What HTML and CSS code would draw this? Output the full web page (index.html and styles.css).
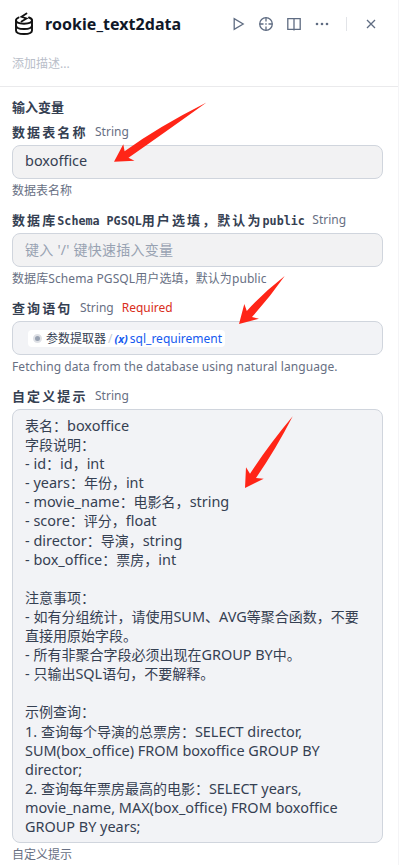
FILE: index.html
```html
<!DOCTYPE html>
<html lang="zh-CN">
<head>
<meta charset="UTF-8">
<meta name="viewport" content="width=device-width, initial-scale=1.0">
<title>rookie_text2data</title>
<link rel="stylesheet" href="styles.css">
</head>
<body>

<div class="panel">
    <header class="header">
        <div class="title-row">
            <svg class="logo" width="20" height="24" viewBox="0 0 20 24" fill="none" stroke="#111" stroke-width="1.9" stroke-linecap="round">
                <path d="M4.500 5.600C2.800 6.300 2 7.200 2 8.300C2 10.500 5.500 11.700 10 11.700S18 10.500 18 8.300C18 7.200 17 6.200 15 5.500"/>
                <path d="M2 8.300V18.500C2 20.800 5.500 22 10 22S18 20.800 18 18.500V8.300"/>
                <path d="M2 13.500C2 15.800 5.500 17 10 17S18 15.800 18 13.500"/>
                <path d="M12.500 1.500L7.500 4.800L12.500 6.500L7.500 9.500" stroke-width="1.8"/>
            </svg>
            <h1 class="title">rookie_text2data</h1>
            <div class="actions">
                <svg width="16" height="16" viewBox="0 0 16 16"><path d="M3.200 2.600V13.400L12.200 8Z"/></svg>
                <svg width="16" height="16" viewBox="0 0 16 16"><circle cx="8" cy="8" r="6.300"/><path d="M8 1.700V5.500M8 10.500V14.300M1.700 8H5.500M10.500 8H14.300M7.300 8H8.700"/></svg>
                <svg width="16" height="16" viewBox="0 0 16 16"><path d="M1.800 2.600H14.200V13.400H1.800ZM8 2.600V14.600"/></svg>
                <svg class="dots" width="16" height="16" viewBox="0 0 16 16"><circle cx="3" cy="8" r="1.300"/><circle cx="8" cy="8" r="1.300"/><circle cx="13" cy="8" r="1.300"/></svg>
                <span class="divider"></span>
                <svg width="16" height="16" viewBox="0 0 16 16"><path d="M4 4L12 12M12 4L4 12"/></svg>
            </div>
        </div>
        <p class="desc">添加描述...</p>
    </header>

    <main class="content">
        <h2 class="section-title">输入变量</h2>

        <div class="field">
            <div class="label"><b>数据表名称</b><span class="type">String</span></div>
            <div class="input"><span class="en">boxoffice</span></div>
            <p class="help">数据表名称</p>
        </div>

        <div class="field">
            <div class="label"><b>数据库<i>Schema PGSQL</i>用户选填，默认为<i>public</i></b><span class="type">String</span></div>
            <div class="input placeholder">键入 '/' 键快速插入变量</div>
            <p class="help wide">数据库Schema PGSQL用户选填，默认为public</p>
        </div>

        <div class="field">
            <div class="label"><b>查询语句</b><span class="type">String</span><span class="required">Required</span></div>
            <div class="input filled">
                <span class="tag"><span class="node-icon"></span>参数提取器<span class="slash">/</span><span class="var-icon">(x)</span><span class="var">sql_requirement</span></span>
            </div>
            <p class="help wide">Fetching data from the database using natural language.</p>
        </div>

        <div class="field">
            <div class="label"><b>自定义提示</b><span class="type">String</span></div>
            <div class="textarea">
                <p>表名：<span class="en">boxoffice</span></p>
                <p>字段说明：</p>
                <p><span class="en">- id</span>：<span class="en">id</span>，<span class="en">int</span></p>
                <p><span class="en">- years</span>：年份，<span class="en">int</span></p>
                <p><span class="en">- movie_name</span>：电影名，<span class="en">string</span></p>
                <p><span class="en">- score</span>：评分，<span class="en">float</span></p>
                <p><span class="en">- director</span>：导演，<span class="en">string</span></p>
                <p><span class="en">- box_office</span>：票房，<span class="en">int</span></p>
                <p><br></p>
                <p>注意事项：</p>
                <p><span class="en">- </span>如有分组统计，请使用<span class="en">SUM</span>、<span class="en">AVG</span>等聚合函数，不要<br>直接用原始字段。</p>
                <p><span class="en">- </span>所有非聚合字段必须出现在<span class="en">GROUP BY</span>中。</p>
                <p><span class="en">- </span>只输出<span class="en">SQL</span>语句，不要解释。</p>
                <p><br></p>
                <p>示例查询：</p>
                <p><span class="en">1. </span>查询每个导演的总票房：<span class="en">SELECT director,<br>SUM(box_office) FROM boxoffice GROUP BY<br>director;</span></p>
                <p><span class="en">2. </span>查询每年票房最高的电影：<span class="en">SELECT years,<br>movie_name, MAX(box_office) FROM boxoffice<br>GROUP BY years;</span></p>
            </div>
            <p class="help">自定义提示</p>
        </div>
    </main>

    <!-- red pointers drawn over the form -->
    <svg class="arrows" width="400" height="865" viewBox="0 0 400 865">
        <path d="M114 161.700L123.300 144.300L124.600 151.200Q158 127 206.500 102.500Q164 133 128.500 157.800L134.500 160.700Z"/>
        <path d="M239 324L244.300 304L246.800 311Q263 293 284.700 276Q270 297 252 317L259 318.700Z"/>
        <path d="M245 488L246 467.300L250 473.700Q268 446 292.700 416.300Q276 449 256 478L263.700 478.700Z"/>
    </svg>
</div>

</body>
</html>
```
FILE: styles.css
```css
* {
    box-sizing: border-box;
    margin: 0;
    padding: 0;
}

body {
    font-family: "Noto Sans", "Noto Sans CJK SC", sans-serif;
    background-color: #fff;
    color: #354052;
}

.panel {
    position: relative;
    width: 399px;
    height: 865px;
    border-right: 1px solid #f4f4f6;
    overflow: hidden;
}

.header {
    height: 87px;
    padding: 12px 19px 0 14px;
    border-bottom: 1px solid #eaeaec;
}

.title-row {
    display: flex;
    align-items: center;
    height: 24px;
}

.title {
    flex: 1;
    margin-left: 11px;
    font-size: 16px;
    line-height: 24px;
    letter-spacing: 0.05px;
    color: #101828;
    white-space: nowrap;
}

.actions {
    display: flex;
    align-items: center;
    gap: 12px;
}

.actions svg {
    fill: none;
    stroke: #5f6c82;
    stroke-width: 1.3;
}

.actions svg:first-child {
    margin-right: -1px;
    margin-left: 1px;
}

.actions .dots {
    fill: #5f6c82;
    stroke: none;
}

.divider {
    width: 1px;
    height: 14px;
    margin: 0 4px;
    background-color: #e2e4e8;
}

.desc {
    margin: 18px 0 0 -2px;
    font-size: 12px;
    line-height: 20px;
    color: #b9bec9;
}

.content {
    padding: 10px 15px 0 12px;
}

.section-title {
    font-size: 13px;
    line-height: 20px;
    height: 22px;
    color: #354052;
}

.field {
    height: 88px;
}

.label {
    display: flex;
    align-items: center;
    height: 26px;
    padding-bottom: 2px;
    white-space: nowrap;
    font-size: 12px;
}

.label b {
    font-family: "DejaVu Sans Mono", "Noto Sans CJK SC", monospace;
    font-size: 13px;
    letter-spacing: 2.1px;
}

.label i {
    font-size: 11.7px;
    font-style: normal;
    letter-spacing: 0;
}

.type {
    margin-left: 7.5px;
    color: #676f83;
}

.required {
    margin-left: 8px;
    color: #d92d20;
}

.input {
    display: flex;
    align-items: center;
    height: 34px;
    padding: 0 12px 2px;
    border: 1px solid #d0d5dd;
    border-radius: 8px;
    background-color: #f2f2f3;
    font-size: 14px;
}

.filled {
    padding-bottom: 0;
    background-color: #f2f3f6;
}

.en {
    font-size: 14.45px;
    line-height: 1;
}

.placeholder {
    color: #98a2b2;
    letter-spacing: 0.25px;
}

.tag {
    display: flex;
    align-items: center;
    height: 17px;
    margin-left: 3px;
    padding: 0 3px 0 5px;
    border-radius: 4px;
    background-color: #fff;
    font-size: 12px;
}

.node-icon {
    width: 9px;
    height: 9px;
    margin-right: 4px;
    border: 2px solid #dfe1e6;
    border-radius: 50%;
    background-color: #98a2b2;
}

.slash {
    margin: 0 2px;
    color: #c5cad3;
}

.var-icon {
    margin-right: 2px;
    font-size: 11px;
    font-weight: bold;
    font-style: italic;
    color: #155aef;
}

.var {
    color: #155aef;
}

.help {
    height: 28px;
    padding-top: 2px;
    font-size: 12px;
    line-height: 20px;
    color: #676f83;
    white-space: nowrap;
}

.wide {
    letter-spacing: 0.09px;
}

.textarea {
    height: 434px;
    padding: 6px 12px;
    border: 1px solid #d0d5dd;
    border-radius: 8px;
    background-color: #f2f3f6;
    font-size: 14px;
    line-height: 19.1px;
    white-space: nowrap;
}

.arrows {
    position: absolute;
    top: 0;
    left: 0;
    fill: #ff2517;
}
```
